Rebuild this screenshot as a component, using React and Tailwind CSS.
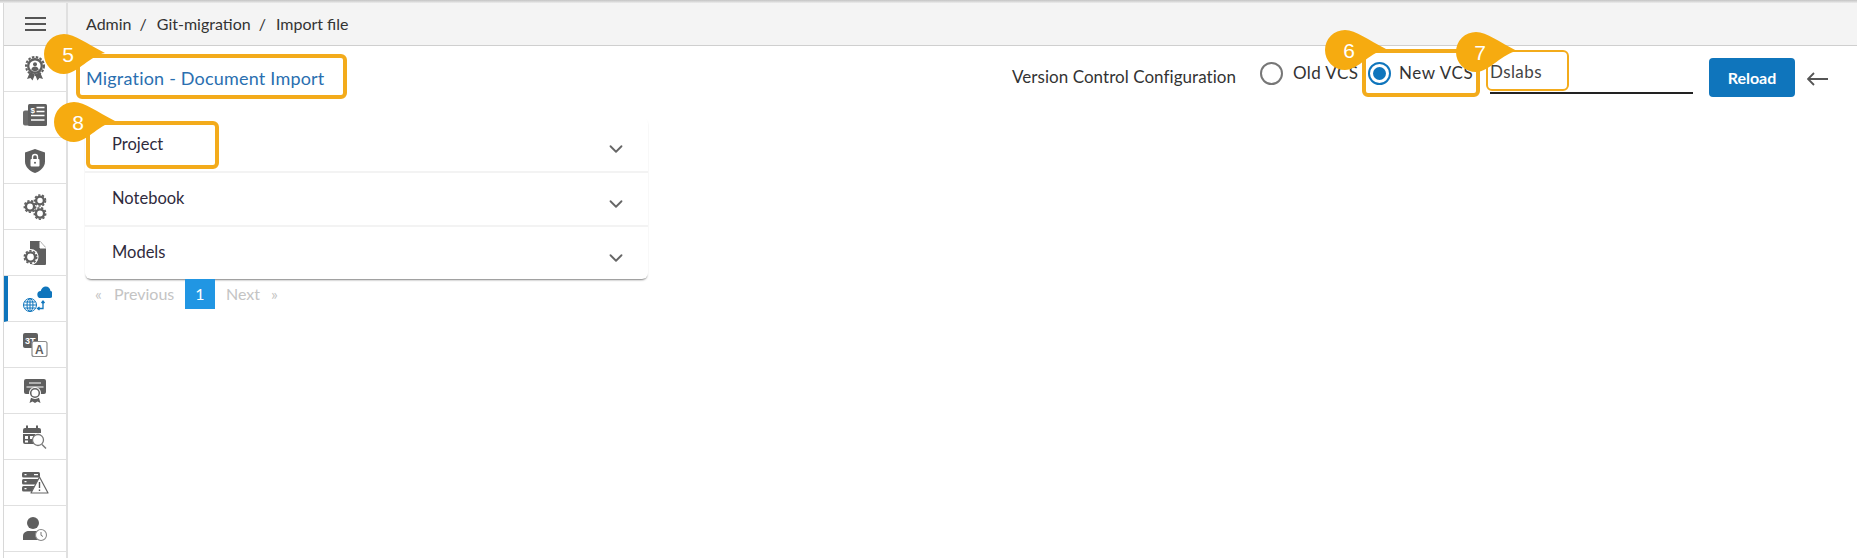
import React from "react";
import { ChevronDown } from "lucide-react";

const GREY = "#5f5f5f";

// small gear: dashed ring gives the teeth, R is the overall radius
const Gear = ({ x, y, R, color = GREY }) => (
  <g>
    <circle cx={x} cy={y} r={R - 0.8} fill="none" stroke={color} strokeWidth={1.6} strokeDasharray="2.2 1.7" />
    <circle cx={x} cy={y} r={R - 2.4} fill="none" stroke={color} strokeWidth={2.4} />
  </g>
);

const AwardIcon = () => (
  <svg width="24" height="26" viewBox="0 0 24 26">
    <path d="M7 16l-3 7 3.500-1 2 2.500 2.500-6zM17 16l3 7-3.500-1-2 2.500-2.500-6z" fill={GREY} />
    <circle cx="12" cy="10" r="9" fill="none" stroke={GREY} strokeWidth="2" strokeDasharray="2.500 1.400" />
    <circle cx="12" cy="10" r="8" fill={GREY} />
    <circle cx="12" cy="10" r="5.600" fill="#fff" />
    <circle cx="12" cy="8.300" r="2" fill={GREY} />
    <path d="M8.300 13.800c.4-2.500 2-3.200 3.700-3.200s3.300.7 3.700 3.200a5.500 5.500 0 0 1-7.400 0z" fill={GREY} />
  </svg>
);

const BillIcon = () => (
  <svg width="26" height="24" viewBox="0 0 26 24">
    <path d="M1 9.500a2 2 0 0 1 2-2h4v15H3a2 2 0 0 1-2-2z" fill="#6b6b6b" />
    <rect x="6" y="1" width="19" height="22" rx="1.500" fill={GREY} />
    <text x="8.500" y="9.500" fontSize="8" fontWeight="700" fill="#fff" fontFamily="Liberation Sans, sans-serif">$</text>
    <path d="M14.500 4.500h8M14.500 8.500h8M9 12.500h13.500M9 17h13.500" stroke="#fff" strokeWidth="1.400" />
  </svg>
);

const ShieldIcon = () => (
  <svg width="22" height="26" viewBox="0 0 22 26">
    <path d="M11 1l10 3.500v9c0 5.500-4.500 9.500-10 11.500C5.500 23 1 19 1 13.500v-9z" fill={GREY} />
    <rect x="6.500" y="11" width="9" height="7.500" rx="1" fill="#fff" />
    <path d="M8.500 11V9a2.500 2.500 0 0 1 5 0v2" fill="none" stroke="#fff" strokeWidth="1.400" />
    <circle cx="11" cy="14.700" r="1" fill={GREY} />
  </svg>
);

const GearsIcon = () => (
  <svg width="24" height="26" viewBox="0 0 24 26">
    <Gear x={7} y={12.500} R={6.500} />
    <Gear x={17} y={6.500} R={6.300} />
    <Gear x={17} y={19.500} R={6.500} />
  </svg>
);

const FileGearIcon = () => (
  <svg width="24" height="26" viewBox="0 0 24 26">
    <path d="M7 1h10l6 6.500V24a1 1 0 0 1-1 1H7z" fill={GREY} />
    <path d="M17 1.500V8h6" fill="#fff" stroke="#fff" strokeWidth="1" />
    <circle cx="7.500" cy="17" r="8" fill="#fff" />
    <Gear x={7.500} y={17} R={7} />
  </svg>
);

const MigrationIcon = () => (
  <svg width="30" height="28" viewBox="0 0 30 28">
    <g fill="none" stroke="#0f75bc" strokeWidth="1">
      <circle cx="8" cy="20" r="6.500" />
      <ellipse cx="8" cy="20" rx="3" ry="6.500" />
      <path d="M1.500 20h13M2.500 17h11M2.500 23h11M8 13.500v13" />
      <path d="M16 23.500h5v-7M19.500 18l1.500-2 1.500 2M17.500 22l-2 1.500 2 1.500" strokeWidth="1.300" />
    </g>
    <path d="M19 13a3.500 3.500 0 0 1-.3-7c.6-2.600 2.800-4.500 5-4.500 2.600 0 4.600 2 4.800 4.600A3.500 3.500 0 0 1 28 13z" fill="#0f75bc" />
  </svg>
);

const TranslateIcon = () => (
  <svg width="26" height="26" viewBox="0 0 26 26">
    <rect x="1" y="1" width="15" height="15" rx="2" fill={GREY} />
    <text x="3" y="11.500" fontSize="9" fontWeight="700" fill="#fff" fontFamily="Liberation Sans, sans-serif">3T</text>
    <rect x="10" y="9.500" width="15" height="15" rx="2" fill="#fff" stroke="#8a8a8a" strokeWidth="1.200" />
    <text x="13" y="21.500" fontSize="12" fontWeight="700" fill={GREY} fontFamily="Liberation Sans, sans-serif">A</text>
  </svg>
);

const CertificateIcon = () => (
  <svg width="24" height="26" viewBox="0 0 24 26">
    <rect x="1" y="1" width="22" height="15" rx="2" fill={GREY} />
    <path d="M6 5h12M3.500 9h17" stroke="#fff" strokeWidth="1.200" />
    <path d="M8.500 18l-2 7 3-1.500L12 25l2.500-1.500 3 1.500-2-7z" fill={GREY} />
    <circle cx="12" cy="15" r="6" fill="#fff" />
    <circle cx="12" cy="15" r="4.300" fill="none" stroke={GREY} strokeWidth="1.500" />
  </svg>
);

const CalendarSearchIcon = () => (
  <svg width="26" height="26" viewBox="0 0 26 26">
    <path d="M1 6a2 2 0 0 1 2-2h14a2 2 0 0 1 2 2v3H1z" fill={GREY} />
    <path d="M5 1.500v4M15 1.500v4" stroke={GREY} strokeWidth="2" />
    <path d="M1 10h12v10H3a2 2 0 0 1-2-2z" fill={GREY} />
    <path d="M3 12h3v3H3zM8 12h3v3H8zM3 16.500h3v2H3z" fill="#fff" />
    <circle cx="16" cy="16" r="5.500" fill="#fff" stroke="#777" strokeWidth="1.300" />
    <path d="M20 20.500l4 4" stroke="#777" strokeWidth="1.500" />
  </svg>
);

const ServerWarnIcon = () => (
  <svg width="28" height="24" viewBox="0 0 28 24">
    <rect x="1" y="1" width="18" height="5.500" rx="1.500" fill={GREY} />
    <rect x="1" y="8" width="18" height="5.500" rx="1.500" fill={GREY} />
    <rect x="1" y="15" width="18" height="5.500" rx="1.500" fill={GREY} />
    <path d="M3.500 3.700h2M3.500 10.700h2M3.500 17.700h2M13 3.700h4" stroke="#fff" strokeWidth="1.200" />
    <path d="M18.500 6L27 22H10z" fill="#fff" stroke="#666" strokeWidth="1.200" strokeLinejoin="round" />
    <path d="M18.500 11v6M18.500 18.500v1.500" stroke="#555" strokeWidth="1.400" />
  </svg>
);

const UserClockIcon = () => (
  <svg width="26" height="26" viewBox="0 0 26 26">
    <circle cx="11" cy="7" r="6" fill={GREY} />
    <path d="M1 24v-4c0-3.500 3-5 6-5h8c3 0 5 2 5 4v5z" fill={GREY} />
    <circle cx="19" cy="19" r="5.500" fill="#fff" stroke="#8a8a8a" strokeWidth="1.100" />
    <path d="M19 16v3.300l2 1.200" fill="none" stroke="#777" strokeWidth="1" />
  </svg>
);

const sideItems = [
  { icon: <AwardIcon /> },
  { icon: <BillIcon /> },
  { icon: <ShieldIcon /> },
  { icon: <GearsIcon /> },
  { icon: <FileGearIcon /> },
  { icon: <MigrationIcon />, active: true },
  { icon: <TranslateIcon /> },
  { icon: <CertificateIcon /> },
  { icon: <CalendarSearchIcon /> },
  { icon: <ServerWarnIcon /> },
  { icon: <UserClockIcon /> },
];

const AccordionRow = ({ label, first }) => (
  <div
    className={`flex h-[54px] items-center justify-between pl-[27px] pr-[21px] ${first ? "" : "border-t-2 border-[#f3f3f3]"}`}
  >
    <span className={`text-[16.500px] text-[#2f2b3d] ${first ? "mt-0" : "mt-[-1px]"}`}>{label}</span>
    <ChevronDown size={22} strokeWidth={2} className="mt-[10px] text-[#666]" />
  </div>
);

// numbered callout drawn over the page
const Callout = ({ n, left, top }) => (
  <div className="absolute h-10 w-[61px]" style={{ left, top }}>
    <svg width="61" height="40" viewBox="0 0 61 40" className="absolute inset-0">
      <path d="M20 0C31 0 43 10 61 19 47 21 33 40 20 40A20 20 0 0 1 20 0z" fill="#f6ab10" />
    </svg>
    <span
      className="absolute left-0 top-0 flex h-10 w-12 items-center justify-center text-[21px] leading-none text-white"
      style={{ fontFamily: "'Liberation Sans', sans-serif" }}
    >
      {n}
    </span>
  </div>
);

const Frame = ({ left, top, width, height, thin }) => (
  <div
    className={`absolute rounded-md border-[#f3ab1b] ${thin ? "border-2" : "border-4"}`}
    style={{ left, top, width, height }}
  />
);

const App = () => {
  return (
    <div
      className="relative h-[558px] w-[1857px] overflow-hidden bg-white"
      style={{ fontFamily: "Lato, 'Open Sans', sans-serif" }}
    >
      <div className="h-[3px] bg-gradient-to-b from-[#c4c4c4] to-[#ececec]" />
      <div className="flex h-[555px]">
        {/* sidebar */}
        <div className="ml-[3px] w-[65px] shrink-0 border-x border-l-[#d8d8d8] border-r-2 border-r-[#e0e0e0]">
          <div className="flex h-[43px] items-center justify-center border-b border-[#cfcfcf] bg-[#f4f4f4]">
            <div className="flex w-[21px] flex-col gap-[4px]">
              <span className="h-[2px] bg-[#555]" />
              <span className="h-[2px] bg-[#555]" />
              <span className="h-[2px] bg-[#555]" />
            </div>
          </div>
          {sideItems.map((item, i) => (
            <div
              key={i}
              className={`flex h-[46px] items-center justify-center border-b border-[#e0e0e0] ${item.active ? "border-l-4 border-l-[#0f75bc]" : ""}`}
            >
              {item.icon}
            </div>
          ))}
        </div>

        {/* main */}
        <div className="min-w-0 flex-1">
          <div className="flex h-[43px] items-center gap-[8px] border-b border-[#cfcfcf] bg-[#f4f4f4] pl-[18px] text-[16px] text-[#333]">
            <span>Admin</span>
            <span className="mr-[2px]">/</span>
            <span>Git-migration</span>
            <span className="mr-[2px]">/</span>
            <span>Import file</span>
          </div>

          <div className="flex items-start justify-between pl-[18px] pr-[29px]">
            <h1 className="mt-[19px] text-[18px] font-normal tracking-[0.2px] text-[#2a6fb0]">
              Migration - Document Import
            </h1>
            <div className="mt-[12px] flex items-start text-[17px]">
              <span className="mt-[6px] w-[248px] tracking-[0.05px] text-[#333]">Version Control Configuration</span>
              <span className="mt-[4px] h-[23px] w-[23px] rounded-full border-2 border-[#777] bg-white" />
              <span className="ml-[10px] mt-[2px] w-[75px] tracking-[0.4px] text-[#333]">Old VCS</span>
              <span className="mt-[4px] flex h-[23px] w-[23px] items-center justify-center rounded-full border-2 border-[#0f75bc]">
                <span className="h-[13px] w-[13px] rounded-full bg-[#0f75bc]" />
              </span>
              <span className="ml-[8px] mt-[2px] w-[91px] tracking-[0.6px] text-[#333]">New VCS</span>
              <div className="h-[36px] w-[203px] border-b-2 border-[#222] pt-[1px] tracking-[0.4px] text-[#444]">
                Dslabs
              </div>
              <button className="ml-[16px] h-[39px] w-[86px] rounded bg-[#0f75bc] text-[16px] font-bold text-white">
                Reload
              </button>
              <svg width="21" height="14" viewBox="0 0 21 14" className="ml-[12px] mt-[14px]">
                <path d="M1 7h20M7 1L1 7l6 6" fill="none" stroke="#555" strokeWidth="1.800" />
              </svg>
            </div>
          </div>

          <div className="ml-[17px] mt-[20px] w-[563px]">
            <div className="rounded-md shadow-[0_2px_2px_-1px_rgba(0,0,0,0.5)]">
              <AccordionRow label="Project" first />
              <AccordionRow label="Notebook" />
              <AccordionRow label="Models" />
            </div>
            <div className="flex h-[30px] items-center text-[16px] text-[#c4c4c4]">
              <span className="ml-[10px] w-[19px]">«</span>
              <span className="w-[71px]">Previous</span>
              <span className="flex h-[30px] w-[30px] items-center justify-center bg-[#2196e3] text-white">1</span>
              <span className="ml-[11px] w-[45px]">Next</span>
              <span>»</span>
            </div>
          </div>
        </div>
      </div>

      {/* tutorial annotations */}
      <Frame left={76} top={54} width={271} height={45} />
      <Frame left={86} top={121} width={133} height={48} />
      <Frame left={1362} top={49} width={118} height={48} />
      <Frame left={1486} top={50} width={83} height={41} thin />
      <Callout n="5" left={44} top={34} />
      <Callout n="8" left={54} top={102} />
      <Callout n="6" left={1325} top={30} />
      <Callout n="7" left={1456} top={32} />
    </div>
  );
};

export default App;
